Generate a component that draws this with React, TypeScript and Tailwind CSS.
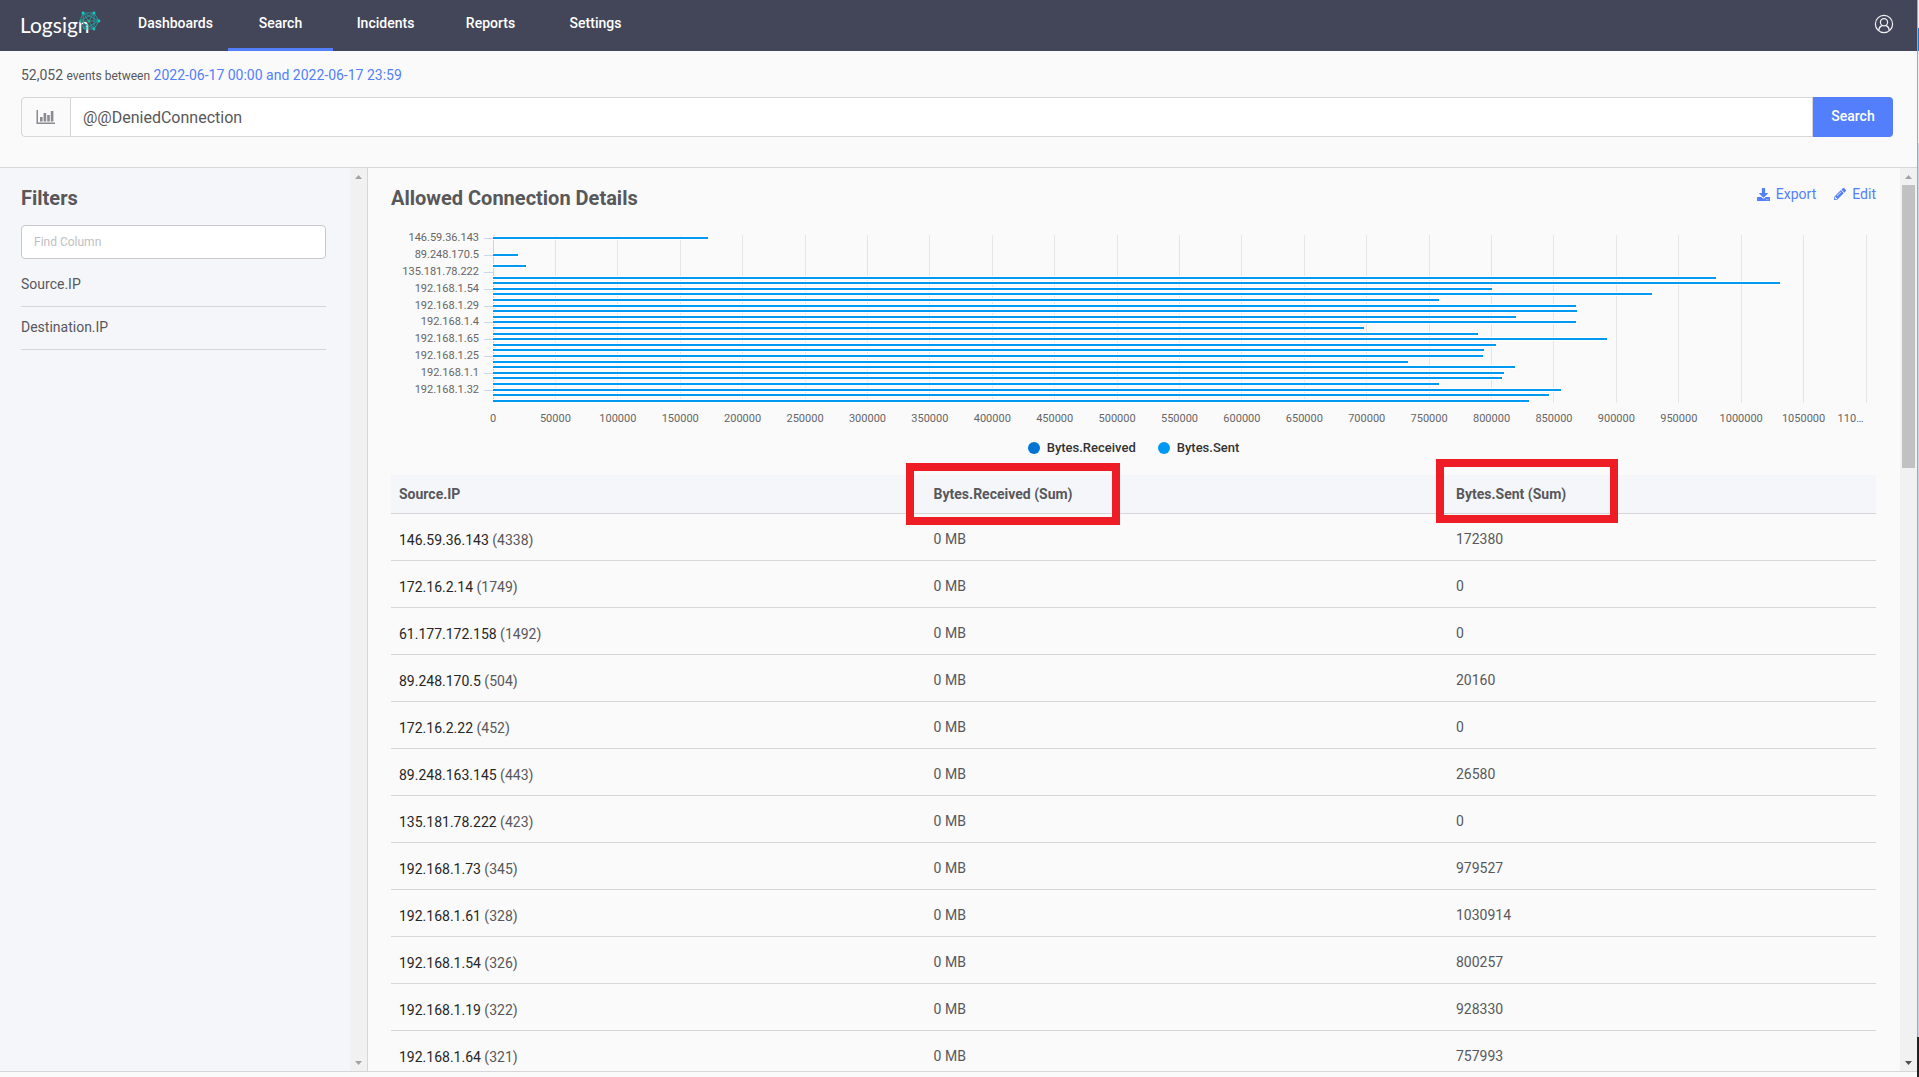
import { FaDownload, FaPencilAlt } from "react-icons/fa";

const NAV_ITEMS = ["Dashboards", "Search", "Incidents", "Reports", "Settings"];

const FILTERS = ["Source.IP", "Destination.IP"];

const ROWS = [
  { ip: "146.59.36.143", count: 4338, sent: 172380 },
  { ip: "172.16.2.14", count: 1749, sent: 0 },
  { ip: "61.177.172.158", count: 1492, sent: 0 },
  { ip: "89.248.170.5", count: 504, sent: 20160 },
  { ip: "172.16.2.22", count: 452, sent: 0 },
  { ip: "89.248.163.145", count: 443, sent: 26580 },
  { ip: "135.181.78.222", count: 423, sent: 0 },
  { ip: "192.168.1.73", count: 345, sent: 979527 },
  { ip: "192.168.1.61", count: 328, sent: 1030914 },
  { ip: "192.168.1.54", count: 326, sent: 800257 },
  { ip: "192.168.1.19", count: 322, sent: 928330 },
  { ip: "192.168.1.64", count: 321, sent: 757993 },
];

// the chart shows more hosts than the first page of the table
const SENT = [
  ...ROWS.map((row) => row.sent),
  867400, 868300, 819200, 867400, 697800, 789400, 892100, 803700, 794300,
  793400, 733300, 818400, 810300, 808700, 757600, 855400, 846400, 830200,
];

const Y_LABELS = [
  "146.59.36.143",
  "89.248.170.5",
  "135.181.78.222",
  "192.168.1.54",
  "192.168.1.29",
  "192.168.1.4",
  "192.168.1.65",
  "192.168.1.25",
  "192.168.1.1",
  "192.168.1.32",
];

const MAX = 1100000;
const STEP = 50000;
const TICKS = Array.from({ length: MAX / STEP + 1 }, (_, i) => i * STEP);
const PLOT_HEIGHT = 168;
const PITCH = PLOT_HEIGHT / SENT.length;

const percent = (value: number) => `${(value / MAX) * 100}%`;
const barTop = (index: number) => Math.ceil(2 + index * PITCH - 0.001);

const Logo = () => (
  <svg width="84" height="34" viewBox="0 0 84 34" role="img" aria-label="Logsign">
    <text
      x="-1"
      y="24"
      fill="#ffffff"
      fontSize="21"
      fontFamily="Lato, sans-serif"
    >
      Logsign
    </text>
    <g stroke="#1fa8a6" strokeWidth="0.8" fill="none">
      <path d="M62 4 L73 4 L78 12 L73 20 L63 20 L59 12 Z" />
      <path d="M62 4 L73 20 M73 4 L63 20 M59 12 L78 12 M62 4 L78 12 L63 20 Z M73 4 L59 12 L73 20 Z" />
    </g>
    <g fill="#16c8c0">
      <circle cx="62" cy="4" r="1.4" />
      <circle cx="73" cy="4" r="1.4" />
      <circle cx="78" cy="12" r="1.4" />
      <circle cx="73" cy="20" r="1.4" />
      <circle cx="59" cy="12" r="1" fill="#2bb673" />
      <circle cx="68" cy="12" r="1.2" fill="#2bb673" />
    </g>
  </svg>
);

const UserIcon = () => (
  <svg
    width="20"
    height="20"
    viewBox="0 0 20 20"
    fill="none"
    stroke="#f1f1f4"
    strokeWidth="1.2"
  >
    <circle cx="10" cy="10" r="8.6" />
    <circle cx="10" cy="8.2" r="3.6" />
    <path d="M4.6 16.6 C5 13.4 6.4 12.2 7.8 11.6 M15.4 16.6 C15 13.4 13.6 12.2 12.2 11.6" />
  </svg>
);

const BarChartIcon = () => (
  <svg width="20" height="16" viewBox="0 0 20 16" fill="#8a8a90">
    <path d="M0.5 1 H2 V13.5 H19 V15 H0.5 Z" />
    <path d="M4 8 H6.6 V12.5 H4 Z M7.6 4 H10.2 V12.5 H7.6 Z M11.2 6 H13.8 V12.5 H11.2 Z M14.8 2 H17.4 V12.5 H14.8 Z" />
  </svg>
);

const Arrow: React.FC<{ down?: boolean; dark?: boolean }> = ({ down, dark }) => (
  <div className="flex h-[17px] shrink-0 items-center justify-center">
    <svg width="7" height="4" viewBox="0 0 7 4" fill={dark ? "#505050" : "#a3a3a3"}>
      <path d={down ? "M0 0 H7 L3.5 4 Z" : "M0 4 H7 L3.5 0 Z"} />
    </svg>
  </div>
);

const Chart = () => (
  <div className="mt-[23px]">
    <div className="flex h-[201px] pr-[10px]">
      <svg
        width="102"
        height="201"
        className="shrink-0 overflow-visible"
        fontSize="11"
        fill="#666666"
      >
        {Y_LABELS.map((label, i) => {
          const y = barTop(i * 3) + 1;
          return (
            <g key={label}>
              <text x="88" y={y + 3} textAnchor="end">
                {label}
              </text>
              <rect x="93" y={y} width="9" height="1" fill="#ccd6eb" />
            </g>
          );
        })}
      </svg>
      <svg
        height="201"
        className="min-w-0 flex-1 overflow-visible"
        fontSize="11"
        fill="#666666"
        shapeRendering="crispEdges"
      >
        {TICKS.map((tick) => (
          <line
            key={tick}
            x1={percent(tick)}
            x2={percent(tick)}
            y1="0"
            y2={PLOT_HEIGHT}
            stroke={tick === 0 ? "#ccd6eb" : "#e6e6e6"}
          />
        ))}
        {SENT.map((value, i) =>
          value > 0 ? (
            <g key={i}>
              <rect y={barTop(i) - 1} width={percent(value + 800)} height="4" fill="#ffffff" />
              <rect y={barTop(i)} width={percent(value)} height="2" fill="#0099f2" />
            </g>
          ) : null
        )}
        {TICKS.slice(0, -1).map((tick) => (
          <text key={tick} x={percent(tick)} y="187" textAnchor="middle">
            {tick}
          </text>
        ))}
        <text x={percent(MAX - 2000)} y="187" textAnchor="end">
          110…
        </text>
      </svg>
    </div>
    <div className="flex h-6 items-center justify-center gap-[22px] text-[13px] font-medium text-[#333333]">
      <div className="flex items-center gap-[7px]">
        <span className="size-3 rounded-full bg-[#0075d4]" />
        Bytes.Received
      </div>
      <div className="flex items-center gap-[7px]">
        <span className="size-3 rounded-full bg-[#0099f2]" />
        Bytes.Sent
      </div>
    </div>
  </div>
);

const DetailsTable = () => (
  <table className="mt-[15px] w-full table-fixed border-collapse text-left text-sm">
    <thead>
      <tr className="h-[38px] border-b border-[#d6d6d8] bg-[#f5f6fa]">
        <th className="w-[36%] px-2 font-bold">Source.IP</th>
        <th className="relative px-2 font-bold">
          Bytes.Received (Sum)
          <div className="absolute -top-3 -left-5 h-[62px] w-[214px] border-8 border-[#ee1c24]" />
        </th>
        <th className="relative w-[428px] px-2 font-bold">
          Bytes.Sent (Sum)
          <div className="absolute -top-4 -left-3 h-16 w-[182px] border-8 border-[#ee1c24]" />
        </th>
      </tr>
    </thead>
    <tbody>
      {ROWS.map((row) => (
        <tr key={row.ip} className="h-[47px] border-b border-[#d6d6d8]">
          <td className="px-2 pt-1.5">
            <span className="text-[#262626]">{row.ip}</span> ({row.count})
          </td>
          <td className="px-2 pt-1">0 MB</td>
          <td className="px-2 pt-1">{row.sent}</td>
        </tr>
      ))}
    </tbody>
  </table>
);

const App = () => {
  return (
    <div className="flex h-screen overflow-hidden bg-[#fafafa] font-[Roboto,sans-serif] text-sm text-[#58585a]">
      <div className="flex min-w-0 flex-1 flex-col">
        <header className="flex h-[51px] shrink-0 items-center bg-[#434659] pr-[23px] pl-[21px]">
          <a href="#" className="w-[102px]">
            <Logo />
          </a>
          <nav className="flex h-full flex-1">
            {NAV_ITEMS.map((item) => (
              <a
                key={item}
                href="#"
                className={`flex w-[105px] items-center justify-center border-b-[3px] pb-[2px] font-medium text-white ${
                  item === "Search" ? "border-[#537ffc]" : "border-transparent"
                }`}
              >
                {item}
              </a>
            ))}
          </nav>
          <button aria-label="Account" className="pb-[3px]">
            <UserIcon />
          </button>
        </header>

        <section className="h-[117px] shrink-0 border-b border-[#d6d6d8] pt-[14px] pr-[24px] pl-[21px]">
          <p className="leading-5">
            52,052 <span className="text-xs">events between</span>{" "}
            <a href="#" className="text-[#537ffc]">
              2022-06-17 00:00 and 2022-06-17 23:59
            </a>
          </p>
          <form className="mt-3 flex h-10">
            <button
              type="button"
              aria-label="Chart"
              className="flex w-[50px] items-center justify-center rounded-l border border-[#d6d6d8]"
            >
              <BarChartIcon />
            </button>
            <input
              aria-label="Query"
              className="min-w-0 flex-1 border-y border-r border-[#d6d6d8] bg-white px-3 pt-0.5 text-base outline-none"
              defaultValue="@@DeniedConnection"
            />
            <button
              type="button"
              className="w-20 rounded-r bg-[#537ffc] pb-[2px] font-medium text-white"
            >
              Search
            </button>
          </form>
        </section>

        <div className="flex min-h-0 flex-1 border-b border-[#d6d6d8]">
          <aside className="flex w-[368px] shrink-0 border-r border-[#d6d6d8] bg-[#f5f6fa]">
            <div className="flex-1 pt-4 pr-6 pl-[21px]">
              <h2 className="text-xl leading-7 font-bold">Filters</h2>
              <input
                aria-label="Find Column"
                placeholder="Find Column"
                className="mt-[13px] h-[34px] w-full rounded border border-[#c8c8cc] bg-white px-3 text-xs placeholder:text-[#c0c0c4]"
              />
              <ul className="mt-[5px]">
                {FILTERS.map((filter) => (
                  <li
                    key={filter}
                    className="flex h-[43px] items-center border-b border-[#d6d6d8] pb-0.5"
                  >
                    {filter}
                  </li>
                ))}
              </ul>
            </div>
            <div className="flex w-[17px] flex-col justify-between bg-[#f1f1f1]">
              <Arrow />
              <Arrow down />
            </div>
          </aside>

          <main className="min-w-0 flex-1 overflow-hidden pt-4 pr-6 pl-[23px]">
            <div className="flex justify-between">
              <h1 className="text-xl leading-7 font-bold">Allowed Connection Details</h1>
              <div className="flex h-5 items-center gap-[18px] text-[#537ffc]">
                <button className="flex items-center gap-1.5">
                  <FaDownload className="size-[13px]" />
                  Export
                </button>
                <button className="flex items-center gap-1.5">
                  <FaPencilAlt className="size-3" />
                  Edit
                </button>
              </div>
            </div>
            <Chart />
            <DetailsTable />
          </main>
          <div className="flex w-[17px] shrink-0 flex-col bg-[#f1f1f1]">
            <Arrow />
            <div className="mx-[2px] h-[283px] bg-[#c1c1c1]" />
            <div className="flex-1" />
            <Arrow down dark />
          </div>
        </div>
        <footer className="h-[5px] shrink-0" />
      </div>
      {/* window edge */}
      <div className="flex w-[2px] shrink-0 flex-col">
        <div className="h-7 border-l border-[#a5a6ad] bg-[#f0f0f0]" />
        <div className="h-[23px] border-l border-[#a5a6ad] bg-[#1979ca]" />
        <div className="h-[92px] border-l border-[#a5a6ad] bg-[#f0f0f0]" />
        <div className="flex-1 border-l border-[#a5a6ad] bg-[#ced6e6]" />
        <div className="h-10 bg-[#222222]" />
      </div>
    </div>
  );
};

export default App;
